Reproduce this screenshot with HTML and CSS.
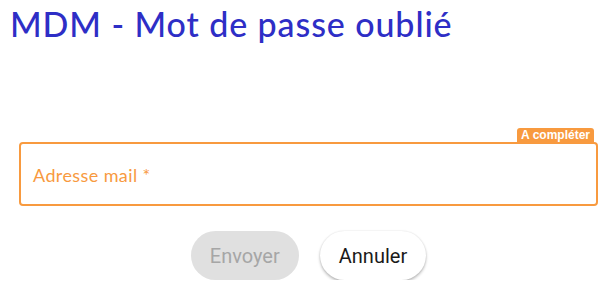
FILE: index.html
```html
<!DOCTYPE html>
<html lang="fr">
  <head>
    <meta charset="UTF-8" />
    <meta name="viewport" content="width=device-width, initial-scale=1.0" />
    <title>MDM - Mot de passe oublié</title>
    <link rel="stylesheet" href="styles.css">
  </head>
  <body>
    <div class="page">
      <h1 class="title">MDM - Mot de passe oublié</h1>

      <form class="reset-form">
        <div class="field">
          <span class="badge">A compléter</span>
          <label class="field-box" for="email">
            <span class="field-label">Adresse mail *</span>
            <input type="email" id="email" name="email" />
          </label>
        </div>

        <div class="actions">
          <button type="submit" class="btn btn-disabled" disabled>Envoyer</button>
          <button type="button" class="btn btn-cancel">Annuler</button>
        </div>
      </form>
    </div>
  </body>
</html>
```

FILE: styles.css
```css
body {
  font-family: Lato, "Open Sans", sans-serif;
  margin: 0;
  padding: 0;
  background: #fff;
}
.page {
  padding: 4px 14px 0 10px;
}
.title {
  margin: 0;
  font-size: 34px;
  font-weight: 500;
  line-height: 40px;
  letter-spacing: 0.9px;
  color: #2e2ec6;
}
.reset-form {
  margin: 98px 0 0 9px;
}
.field {
  position: relative;
}
.badge {
  position: absolute;
  right: 4px;
  top: -14px;
  background: #f89a3f;
  color: #fff;
  font-family: "Liberation Sans", Arial, sans-serif;
  font-weight: bold;
  font-size: 12px;
  line-height: 14px;
  padding: 0 4px;
  border-radius: 3px 3px 0 0;
}
.field-box {
  display: flex;
  align-items: center;
  height: 60px;
  border: 2px solid #f89a3f;
  border-radius: 4px;
  padding: 0 12px;
  box-sizing: content-box;
}
.field-label {
  color: #f89a3f;
  font-size: 18px;
  letter-spacing: 0.4px;
  white-space: nowrap;
  margin-top: 2px;
}
.field-box input {
  border: none;
  outline: none;
  flex: 1;
  background: transparent;
  font: inherit;
}
.actions {
  display: flex;
  justify-content: center;
  gap: 21px;
  margin-top: 25px;
}
.btn {
  font-family: Roboto, sans-serif;
  font-size: 20px;
  height: 49px;
  padding: 0 19px;
  border: none;
  border-radius: 25px;
}
.btn-disabled {
  background: #e0e0e0;
  color: #a6a6a6;
}
.btn-cancel {
  background: #fff;
  color: #1a1a1a;
  cursor: pointer;
  box-shadow: 0 2px 3px rgba(0, 0, 0, 0.25), 0 0 2px rgba(0, 0, 0, 0.12);
}
```
